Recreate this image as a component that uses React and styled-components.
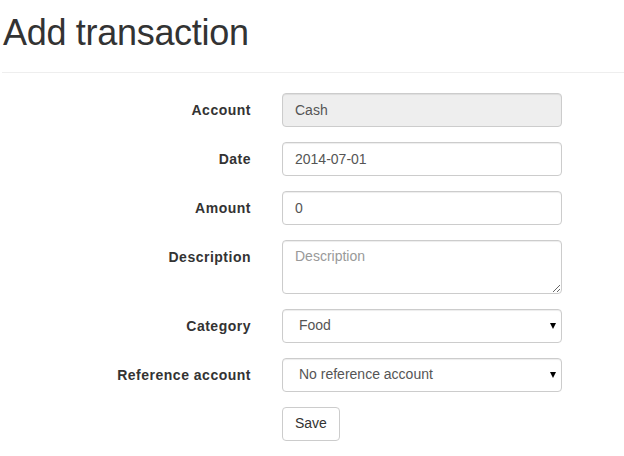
import React from 'react';
import styled, { createGlobalStyle } from 'styled-components';

const GlobalStyle = createGlobalStyle`
  html, body {
    margin: 0;
    background: #fff;
    font-family: "Liberation Sans", Arial, sans-serif;
    font-size: 14px;
    line-height: 1.42857;
    color: #333;
  }
  * { box-sizing: border-box; }
`;

const Page = styled.div`
  padding: 13px 0 0 2px;
`;

const PageHeader = styled.div`
  border-bottom: 1px solid #eee;
  padding-bottom: 9px;
  margin-bottom: 20px;
  h1 {
    margin: 0 0 10px 1px;
    font-size: 36px;
    font-weight: 500;
    line-height: 1.1;
    letter-spacing: -0.3px;
    color: #333;
  }
`;

const Form = styled.form`
  display: grid;
  grid-template-columns: 249px 280px;
  column-gap: 31px;
  row-gap: 15px;
  align-items: start;
`;

const Label = styled.label`
  padding-top: 8px;
  text-align: right;
  font-weight: bold;
  letter-spacing: 0.5px;
  color: #333;
`;

const fieldBase = `
  display: block;
  width: 100%;
  padding: 6px 12px;
  font-family: "Liberation Sans", Arial, sans-serif;
  font-size: 14px;
  line-height: 1.42857;
  color: #555;
  background: #fff;
  border: 1px solid #ccc;
  border-radius: 4px;
  box-shadow: inset 0 1px 1px rgba(0, 0, 0, 0.075);
  outline: none;
`;

const Input = styled.input`
  ${fieldBase}
  height: 34px;
  background: ${(p) => (p.disabled ? '#eee' : '#fff')};
`;

const TextArea = styled.textarea`
  ${fieldBase}
  height: 54px;
  resize: vertical;
  &::placeholder { color: #999; }
`;

const SelectWrap = styled.div`
  position: relative;
`;

const Select = styled.select`
  ${fieldBase}
  height: 34px;
  padding-left: 16px;
  appearance: none;
  -webkit-appearance: none;
`;

const Arrow = styled.span`
  position: absolute;
  right: 6px;
  top: 14px;
  width: 0;
  height: 0;
  border-left: 3px solid transparent;
  border-right: 3px solid transparent;
  border-top: 6px solid #000;
  pointer-events: none;
`;

const Button = styled.button`
  justify-self: start;
  height: 34px;
  padding: 6px 12px;
  font-family: "Liberation Sans", Arial, sans-serif;
  font-size: 14px;
  line-height: 1.42857;
  color: #333;
  background: #fff;
  border: 1px solid #ccc;
  border-radius: 4px;
`;

const Field = ({ label, children }) => (
  <>
    <Label>{label}</Label>
    {children}
  </>
);

export default function App() {
  return (
    <Page>
      <GlobalStyle />
      <PageHeader>
        <h1>Add transaction</h1>
      </PageHeader>
      <Form onSubmit={(e) => e.preventDefault()}>
        <Field label="Account">
          <Input disabled defaultValue="Cash" />
        </Field>
        <Field label="Date">
          <Input defaultValue="2014-07-01" />
        </Field>
        <Field label="Amount">
          <Input defaultValue="0" />
        </Field>
        <Field label="Description">
          <TextArea placeholder="Description" />
        </Field>
        <Field label="Category">
          <SelectWrap>
            <Select defaultValue="food">
              <option value="food">Food</option>
            </Select>
            <Arrow />
          </SelectWrap>
        </Field>
        <Field label="Reference account">
          <SelectWrap>
            <Select defaultValue="none">
              <option value="none">No reference account</option>
            </Select>
            <Arrow />
          </SelectWrap>
        </Field>
        <span />
        <Button type="submit">Save</Button>
      </Form>
    </Page>
  );
}
